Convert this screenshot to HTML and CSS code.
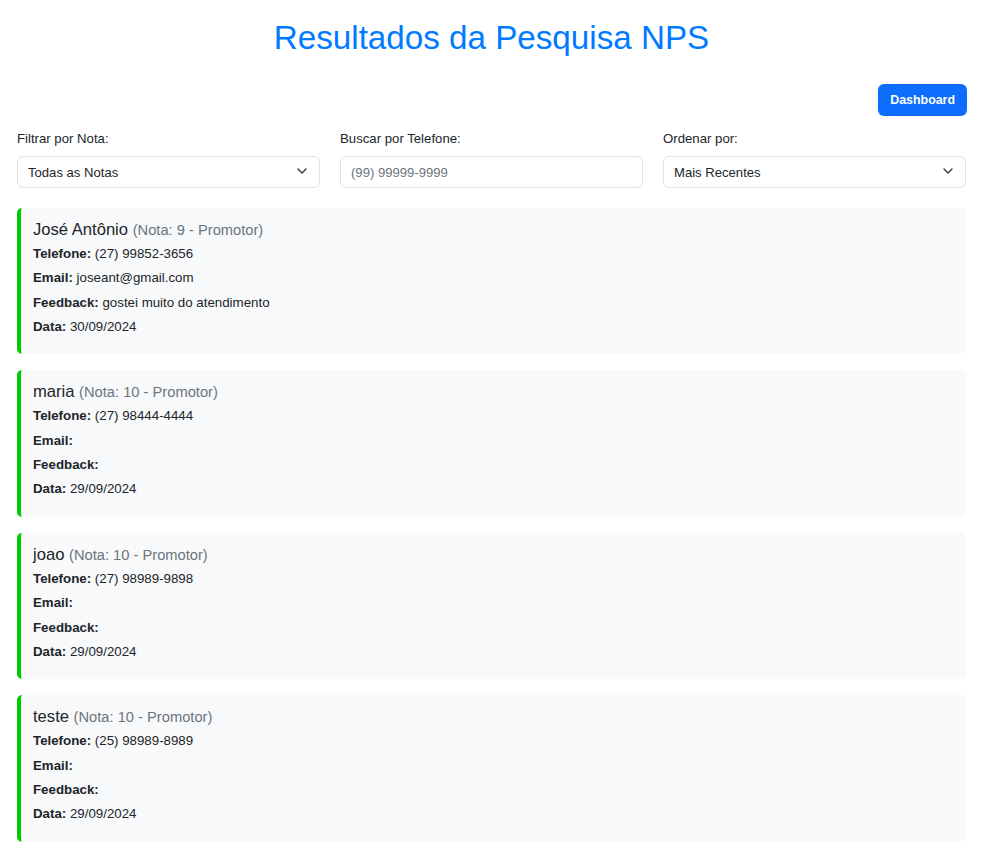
FILE: index.html
```html
<!DOCTYPE html>
<html lang="pt-BR">
<head>
<meta charset="utf-8">
<title>Resultados da Pesquisa NPS</title>
<link rel="stylesheet" href="styles.css">
</head>
<body>
<div class="page">
  <h1 class="title">Resultados da Pesquisa NPS</h1>
  <div class="toolbar">
    <button class="btn-primary">Dashboard</button>
  </div>
  <div class="filters">
    <div class="field">
      <label class="field-label">Filtrar por Nota:</label>
      <div class="select-wrap">
        <select class="control">
          <option>Todas as Notas</option>
        </select>
        <svg class="chevron" width="10" height="6" viewBox="0 0 10 6"><path d="M1 1l4 4 4-4" fill="none" stroke="#343a40" stroke-width="1.4" stroke-linecap="round" stroke-linejoin="round"/></svg>
      </div>
    </div>
    <div class="field">
      <label class="field-label">Buscar por Telefone:</label>
      <input class="control" type="text" placeholder="(99) 99999-9999">
    </div>
    <div class="field">
      <label class="field-label">Ordenar por:</label>
      <div class="select-wrap">
        <select class="control">
          <option>Mais Recentes</option>
        </select>
        <svg class="chevron" width="10" height="6" viewBox="0 0 10 6"><path d="M1 1l4 4 4-4" fill="none" stroke="#343a40" stroke-width="1.4" stroke-linecap="round" stroke-linejoin="round"/></svg>
      </div>
    </div>
  </div>

  <div class="results">
    <div class="card">
      <div class="card-name">José Antônio <span class="card-score">(Nota: 9 - Promotor)</span></div>
      <p class="card-line"><strong>Telefone:</strong> (27) 99852-3656</p>
      <p class="card-line"><strong>Email:</strong> joseant@gmail.com</p>
      <p class="card-line"><strong>Feedback:</strong> gostei muito do atendimento</p>
      <p class="card-line"><strong>Data:</strong> 30/09/2024</p>
    </div>
    <div class="card">
      <div class="card-name">maria <span class="card-score">(Nota: 10 - Promotor)</span></div>
      <p class="card-line"><strong>Telefone:</strong> (27) 98444-4444</p>
      <p class="card-line"><strong>Email:</strong> </p>
      <p class="card-line"><strong>Feedback:</strong> </p>
      <p class="card-line"><strong>Data:</strong> 29/09/2024</p>
    </div>
    <div class="card">
      <div class="card-name">joao <span class="card-score">(Nota: 10 - Promotor)</span></div>
      <p class="card-line"><strong>Telefone:</strong> (27) 98989-9898</p>
      <p class="card-line"><strong>Email:</strong> </p>
      <p class="card-line"><strong>Feedback:</strong> </p>
      <p class="card-line"><strong>Data:</strong> 29/09/2024</p>
    </div>
    <div class="card">
      <div class="card-name">teste <span class="card-score">(Nota: 10 - Promotor)</span></div>
      <p class="card-line"><strong>Telefone:</strong> (25) 98989-8989</p>
      <p class="card-line"><strong>Email:</strong> </p>
      <p class="card-line"><strong>Feedback:</strong> </p>
      <p class="card-line"><strong>Data:</strong> 29/09/2024</p>
    </div>
  </div>
</div>
</body>
</html>
```

FILE: styles.css
```css
* { box-sizing: border-box; }
html, body { margin: 0; padding: 0; background: #fff; }
body {
  font-family: "Liberation Sans", Arial, sans-serif;
  color: #212529;
  font-size: 13.3px;
}
.page {
  padding: 16px 15px 20px 17px;
}
.title {
  margin: 0;
  text-align: center;
  font-weight: 400;
  font-size: 33.2px;
  line-height: 44px;
  color: #007bff;
}
.toolbar {
  display: flex;
  justify-content: flex-end;
  margin-top: 24px;
  margin-right: -1px;
}
.btn-primary {
  height: 32px;
  padding: 0 12px;
  border: none;
  border-radius: 6px;
  background: #0d6efd;
  color: #fff;
  font-family: inherit;
  font-size: 12.4px;
  font-weight: 700;
}
.filters {
  display: grid;
  grid-template-columns: repeat(3, 1fr);
  column-gap: 20px;
  margin-top: 12px;
}
.field { display: flex; flex-direction: column; }
.field-label {
  font-size: 13.2px;
  line-height: 21px;
  margin-bottom: 7px;
}
.select-wrap { position: relative; }
.control {
  width: 100%;
  height: 32px;
  padding: 0 10px;
  border: 1px solid #dee2e6;
  border-radius: 6px;
  background: #fff;
  font-family: inherit;
  font-size: 13.1px;
  color: #212529;
  appearance: none;
  -webkit-appearance: none;
  outline: none;
}
.control::placeholder { color: #6c757d; }
.chevron {
  position: absolute;
  right: 13px;
  top: 12px;
  pointer-events: none;
}
.results {
  display: flex;
  flex-direction: column;
  gap: 16.3px;
  margin-top: 20px;
}
.card {
  background: #f8f9fa;
  border-left: 4px solid #00cc00;
  border-radius: 5px;
  padding: 10px 12px 15px 12px;
}
.card-name {
  font-size: 16.6px;
  line-height: 24px;
}
.card-score {
  color: #6c757d;
  font-size: 14.7px;
}
.card-line {
  margin: 0;
  font-size: 13.3px;
  line-height: 24.3px;
}
.card-line strong { font-weight: 700; }
```
